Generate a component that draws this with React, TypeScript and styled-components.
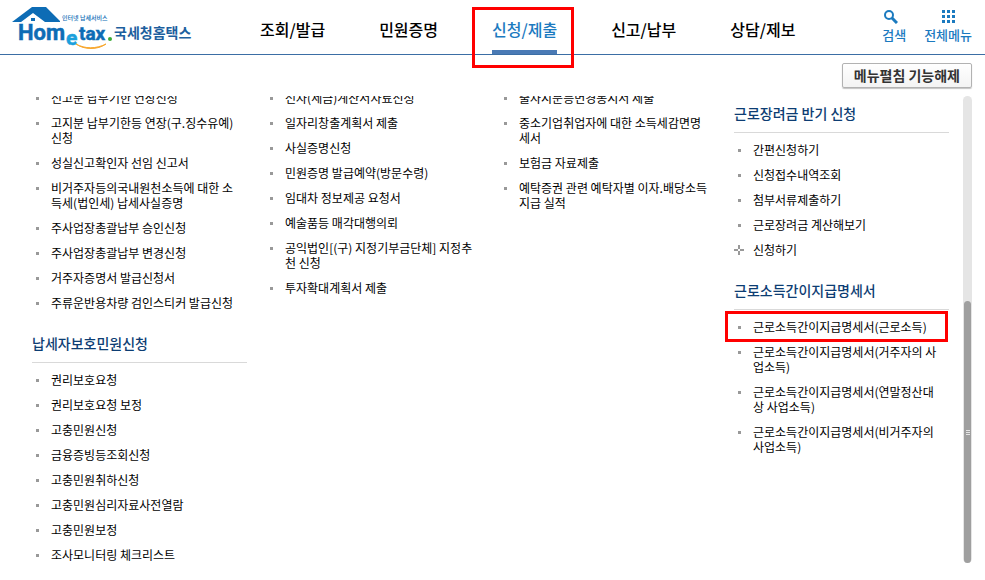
import React from "react";
import styled, { createGlobalStyle, css } from "styled-components";

const GlobalStyle = createGlobalStyle`
  *, *::before, *::after { box-sizing: border-box; }
  body {
    margin: 0;
    background: #fff;
    color: #000;
    font-family: "Noto Sans CJK KR", "Noto Sans", sans-serif;
    font-size: 12px;
    line-height: 15px;
  }
  ul { list-style: none; margin: 0; padding: 0; }
  a { color: inherit; text-decoration: none; }
  button { font: inherit; cursor: pointer; }
`;

const Header = styled.header`
  display: flex;
  height: 55px;
  padding: 0 13px 0 12px;
  border-bottom: 1px solid #3b6ea5;
`;

const LogoLink = styled.a`
  flex: none;
  display: block;
  width: 180px;
  height: 54px;
`;

const Nav = styled.nav`
  margin-left: 68px;
`;

const NavList = styled.ul`
  display: flex;
  gap: 54px;
  height: 100%;
`;

const NavItem = styled.li`
  position: relative;
  display: flex;
`;

const NavLink = styled.a<{ $active?: boolean }>`
  display: block;
  padding-top: 17px;
  color: ${(p) => (p.$active ? "#1b7abf" : "#000")};
  border-bottom: 4px solid ${(p) => (p.$active ? "#4a7ab5" : "transparent")};
  font-size: 16px;
  font-weight: 500;
  line-height: 24px;
  white-space: nowrap;
`;

const Marker = styled.span<{ $kind: "tab" | "row" }>`
  position: absolute;
  border: 3px solid #f00;
  pointer-events: none;
  ${(p) =>
    p.$kind === "tab"
      ? css`inset: 7px -17px -14px -20px;`
      : css`inset: -8px 1px -8px -9px;`}
`;

const Tools = styled.div`
  display: flex;
  gap: 18px;
  margin-left: auto;
`;

const ToolButton = styled.button<{ $align?: string }>`
  display: flex;
  flex-direction: column;
  align-items: ${(p) => p.$align ?? "center"};
  gap: 1px;
  padding: 9px 0 0;
  border: 0;
  background: none;
  color: #1b7abf;
  font-size: 13px;
  font-weight: 500;
  line-height: 20px;
  white-space: nowrap;
`;

const Bar = styled.div`
  display: flex;
  justify-content: flex-end;
  padding: 8px 13px;
`;

const ReleaseButton = styled.button`
  height: 25px;
  padding: 0 11px 2px;
  border: 1px solid #b2b2b2;
  border-radius: 2px;
  background: linear-gradient(#fff, #f3f3f3);
  box-shadow: 0 1px 1px #c4c4c4;
  color: #333;
  font-size: 14px;
  font-weight: 700;
  line-height: 20px;
`;

const Panel = styled.main`
  display: flex;
  gap: 14px;
  padding: 0 13px 16px 32px;
`;

const Viewport = styled.div`
  flex: 1;
  padding-bottom: 1px;
  overflow: hidden;
`;

const Columns = styled.div`
  display: grid;
  grid-template-columns: repeat(4, minmax(0, 1fr));
  gap: 19px;
  margin-top: -6px;
`;

const Column = styled.div<{ $lead?: boolean }>`
  padding-top: ${(p) => (p.$lead ? "13px" : "0")};
`;

const Heading = styled.h2`
  margin: 0 0 9px;
  padding-bottom: 9px;
  border-bottom: 1px solid #d9d9d9;
  color: #0d3d73;
  font-size: 14px;
  font-weight: 500;
  line-height: 20px;

  ul + & { margin-top: 23px; }
`;

const MenuList = styled.ul`
  display: grid;
  gap: 10px;
`;

const MenuItem = styled.li<{ $plus?: boolean }>`
  position: relative;
  padding-left: 19px;
  white-space: nowrap;

  &::before {
    content: "";
    position: absolute;
    left: 4px;
    top: 7px;
    width: 3px;
    height: 3px;
    background: ${(p) => (p.$plus ? "none" : "#999")};
  }
`;

const PlusIcon = styled.svg`
  position: absolute;
  left: 0;
  top: 3px;
`;

const Track = styled.div`
  flex: none;
  display: flex;
  align-items: flex-end;
  justify-content: center;
  width: 9px;
  border-radius: 5px;
  background: #e5e5e5;
`;

const Thumb = styled.div`
  display: flex;
  align-items: center;
  justify-content: center;
  width: 7px;
  height: 56%;
  border-radius: 4px;
  background: #9f9f9f;
`;

type Entry = { lines: string[]; plus?: boolean; marked?: boolean };
const e = (...lines: string[]): Entry => ({ lines });

const filing = [
  e("신고분 납부기한 연장신청"),
  e("고지분 납부기한등 연장(구.징수유예)", "신청"),
  e("성실신고확인자 선임 신고서"),
  e("비거주자등의국내원천소득에 대한 소", "득세(법인세) 납세사실증명"),
  e("주사업장총괄납부 승인신청"),
  e("주사업장총괄납부 변경신청"),
  e("거주자증명서 발급신청서"),
  e("주류운반용차량 검인스티커 발급신청"),
];

const protection = [
  e("권리보호요청"),
  e("권리보호요청 보정"),
  e("고충민원신청"),
  e("금융증빙등조회신청"),
  e("고충민원취하신청"),
  e("고충민원심리자료사전열람"),
  e("고충민원보정"),
  e("조사모니터링 체크리스트"),
];

const certificates = [
  e("전자(세금)계산서자료신청"),
  e("일자리창출계획서 제출"),
  e("사실증명신청"),
  e("민원증명 발급예약(방문수령)"),
  e("임대차 정보제공 요청서"),
  e("예술품등 매각대행의뢰"),
  e("공익법인[(구) 지정기부금단체] 지정추", "천 신청"),
  e("투자확대계획서 제출"),
];

const submissions = [
  e("출자지분등변경통지서 제출"),
  e("중소기업취업자에 대한 소득세감면명", "세서"),
  e("보험금 자료제출"),
  e("예탁증권 관련 예탁자별 이자.배당소득", "지급 실적"),
];

const incentive: Entry[] = [
  e("간편신청하기"),
  e("신청접수내역조회"),
  e("첨부서류제출하기"),
  e("근로장려금 계산해보기"),
  { lines: ["신청하기"], plus: true },
];

const statements: Entry[] = [
  { lines: ["근로소득간이지급명세서(근로소득)"], marked: true },
  e("근로소득간이지급명세서(거주자의 사", "업소득)"),
  e("근로소득간이지급명세서(연말정산대", "상 사업소득)"),
  e("근로소득간이지급명세서(비거주자의", "사업소득)"),
];

function Menu({ items }: { items: Entry[] }) {
  return (
    <MenuList>
      {items.map((item) => (
        <MenuItem key={item.lines[0]} $plus={item.plus}>
          {item.plus && (
            <PlusIcon width="10" height="10" viewBox="0 0 10 10" aria-hidden="true">
              <path d="M5 0v4M5 6v4M0 5h4M6 5h4" stroke="#999" strokeWidth="2" />
            </PlusIcon>
          )}
          <a href="#">
            {item.lines.map((line, i) => (
              <React.Fragment key={line}>
                {i > 0 && <br />}
                {line}
              </React.Fragment>
            ))}
          </a>
          {item.marked && <Marker $kind="row" />}
        </MenuItem>
      ))}
    </MenuList>
  );
}

function Logo() {
  return (
    <svg width="180" height="54" viewBox="12 0 180 54" role="img" aria-label="Hometax 국세청홈택스">
      <path d="M12 22 32 7h14l14 14v1H45L33 13 21 22z" fill="#0d6cb5" />
      <path d="M31 18h4v3h-4z" fill="#0d6cb5" />
      <g fontFamily="Roboto, sans-serif" fontWeight="700" strokeWidth="0.5">
        <text x="18" y="40" fontSize="22" fill="#0d6cb5" stroke="#0d6cb5">Hom</text>
        <text x="66" y="45" fontSize="21" fill="#1ba0dc" stroke="#1ba0dc">e</text>
        <text x="79" y="40" fontSize="19" fill="#0d6cb5" stroke="#0d6cb5">tax</text>
      </g>
      <circle cx="110" cy="39" r="2" fill="#3aaa35" />
      <path d="M76 44c9 5 20 5 30 0-8 6-22 6-30 0z" fill="#f8a830" stroke="#f8a830" />
      <g fontFamily="Noto Sans CJK KR, sans-serif">
        <text x="62" y="20" fontSize="6" fontWeight="500" fill="#0d6cb5">인터넷 납세서비스</text>
        <text x="114" y="38" fontSize="14" fontWeight="700" fill="#1d5f9e">국세청홈택스</text>
      </g>
    </svg>
  );
}

const tabs = ["조회/발급", "민원증명", "신청/제출", "신고/납부", "상담/제보"];
const activeTab = "신청/제출";

export default function App() {
  return (
    <>
      <GlobalStyle />
      <Header>
        <LogoLink href="#"><Logo /></LogoLink>
        <Nav>
          <NavList>
            {tabs.map((tab) => (
              <NavItem key={tab}>
                <NavLink href="#" $active={tab === activeTab}>{tab}</NavLink>
                {tab === activeTab && <Marker $kind="tab" />}
              </NavItem>
            ))}
          </NavList>
        </Nav>
        <Tools>
          <ToolButton type="button" $align="flex-start">
            <svg width="16" height="15" viewBox="0 0 16 15" aria-hidden="true">
              <circle cx="7" cy="6" r="4" fill="none" stroke="currentColor" strokeWidth="2" />
              <path d="m10 9 5 5" stroke="currentColor" strokeWidth="3" />
            </svg>
            검색
          </ToolButton>
          <ToolButton type="button">
            <svg width="13" height="15" viewBox="0 0 13 15" fill="currentColor" aria-hidden="true">
              {[1, 6, 11].map((y) =>
                [0, 5, 10].map((x) => <rect key={`${x}-${y}`} x={x} y={y} width="3" height="3" />)
              )}
            </svg>
            전체메뉴
          </ToolButton>
        </Tools>
      </Header>
      <Bar>
        <ReleaseButton type="button">메뉴펼침 기능해제</ReleaseButton>
      </Bar>
      <Panel>
        <Viewport>
          <Columns>
            <Column>
              <Menu items={filing} />
              <Heading>납세자보호민원신청</Heading>
              <Menu items={protection} />
            </Column>
            <Column><Menu items={certificates} /></Column>
            <Column><Menu items={submissions} /></Column>
            <Column $lead>
              <Heading>근로장려금 반기 신청</Heading>
              <Menu items={incentive} />
              <Heading>근로소득간이지급명세서</Heading>
              <Menu items={statements} />
            </Column>
          </Columns>
        </Viewport>
        <Track>
          <Thumb>
            <svg width="4" height="5" viewBox="0 0 4 5" fill="#e5e5e5" aria-hidden="true">
              <path d="M0 0h4v1H0zM0 2h4v1H0zM0 4h4v1H0z" />
            </svg>
          </Thumb>
        </Track>
      </Panel>
    </>
  );
}
